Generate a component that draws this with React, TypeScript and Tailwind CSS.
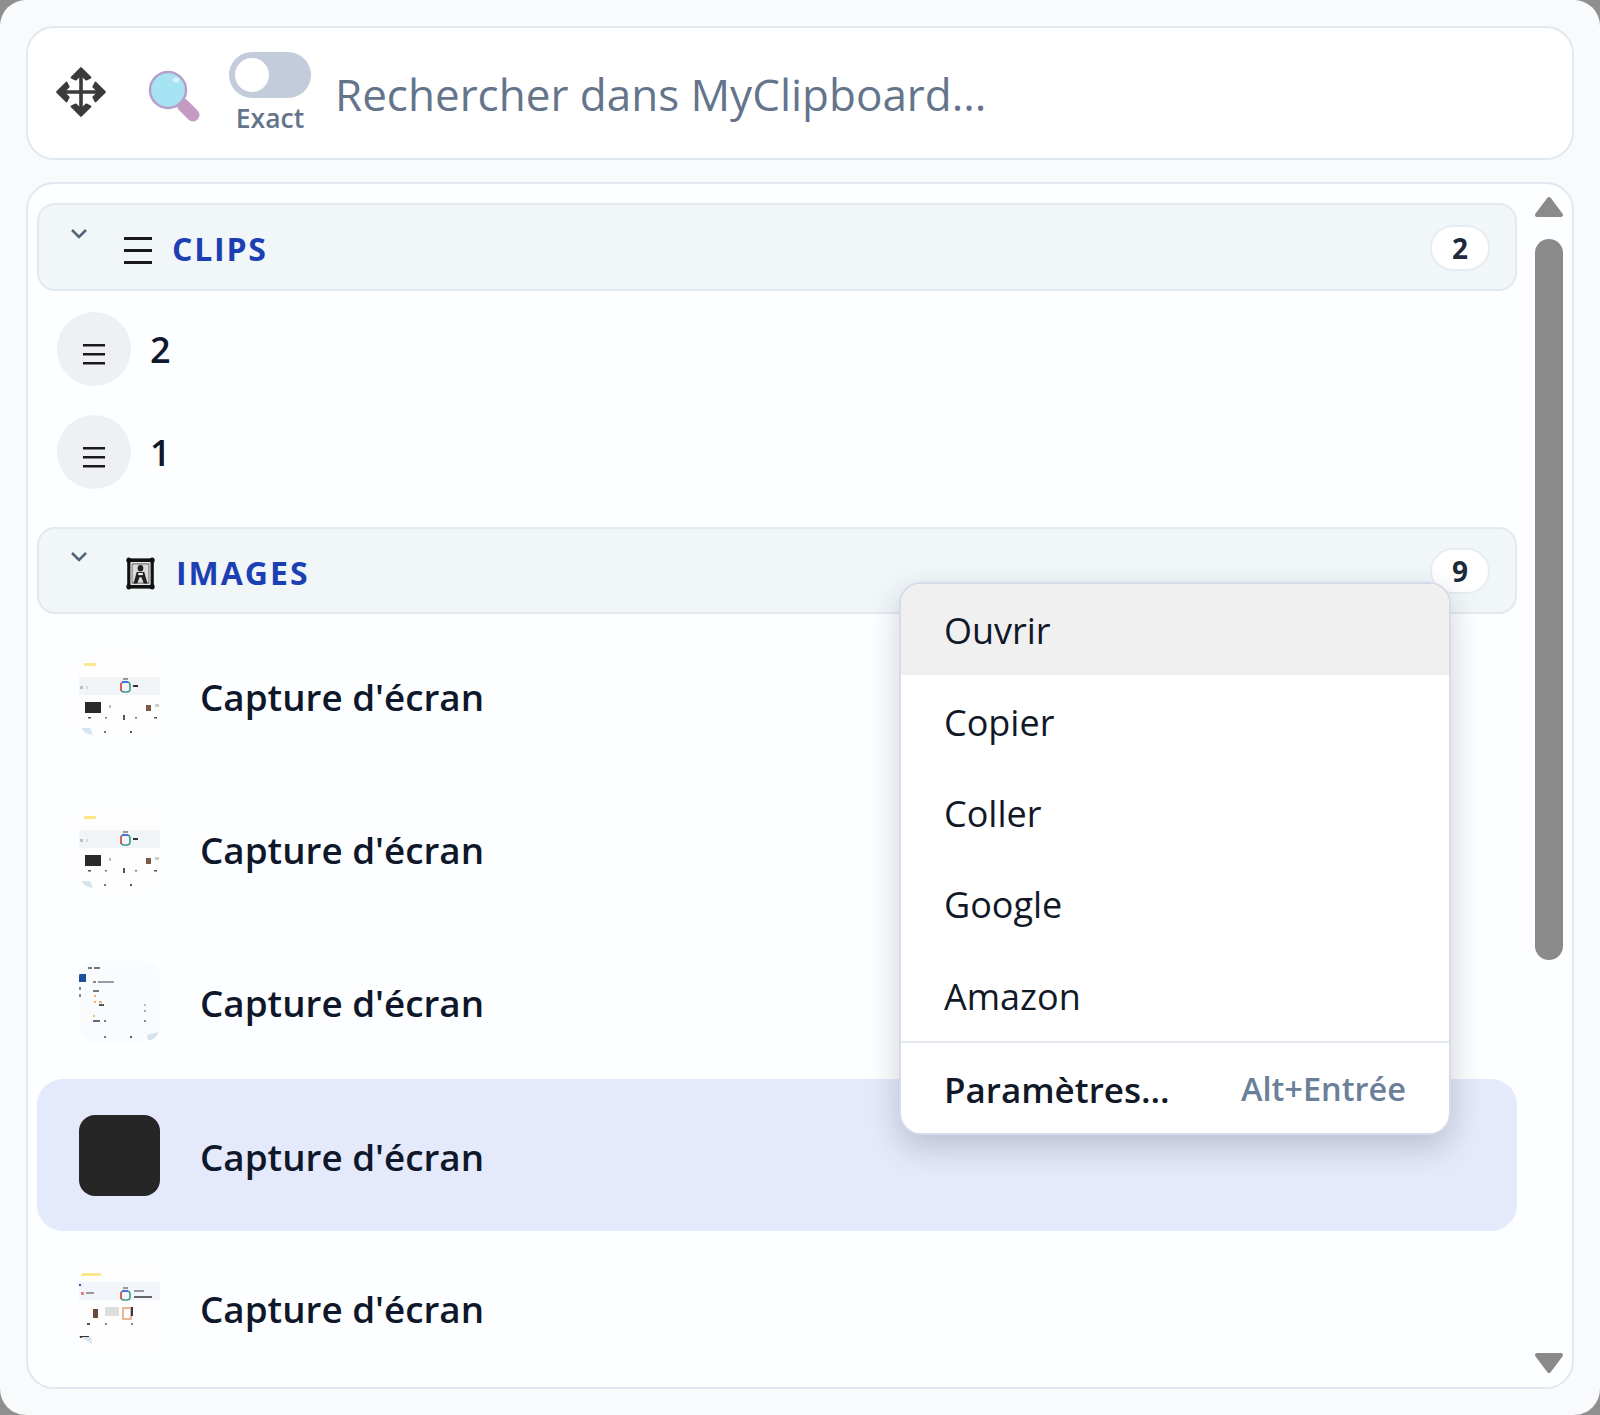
import React from "react";

const FONT = "font-['Open_Sans','Noto_Sans',sans-serif]";

function MoveIcon() {
  return (
    <svg width="56" height="56" viewBox="0 0 52 54" fill="none" className="mb-[2px] -ml-[1px] -mr-[1px] shrink-0">
      <path d="M26 5V49M4 27H48" stroke="#3b3b3b" strokeWidth="3.5" />
      <path d="M17 13L26 4L35 13L31 15L26 10L21 15Z" fill="#3b3b3b" stroke="#3b3b3b" strokeWidth="2" strokeLinejoin="round" />
      <path d="M17 41L26 50L35 41L31 39L26 44L21 39Z" fill="#3b3b3b" stroke="#3b3b3b" strokeWidth="2" strokeLinejoin="round" />
      <path d="M12 18L3 27L12 36L14 32L9 27L14 22Z" fill="#3b3b3b" stroke="#3b3b3b" strokeWidth="2" strokeLinejoin="round" />
      <path d="M40 18L49 27L40 36L38 32L43 27L38 22Z" fill="#3b3b3b" stroke="#3b3b3b" strokeWidth="2" strokeLinejoin="round" />
    </svg>
  );
}

function SearchIcon() {
  return (
    <svg width="54" height="54" viewBox="0 0 54 54" fill="none">
      <path d="M35 35L45 45" stroke="#c49ac2" strokeWidth="13" strokeLinecap="round" />
      <circle cx="20" cy="20" r="18" fill="#a6e3f3" stroke="#b9a0cc" strokeWidth="2.5" />
      <ellipse cx="28" cy="10" rx="3.5" ry="2.5" fill="#d6f3fa" />
    </svg>
  );
}

function Lines({ w, gap, stroke }: { w: number; gap: number; stroke: number }) {
  const h = gap * 2 + stroke;
  return (
    <svg width={w} height={h} viewBox={`0 0 ${w} ${h}`}>
      <rect x="0" y="0" width={w} height={stroke} fill="#1a1a1a" />
      <rect x="0" y={gap} width={w} height={stroke} fill="#1a1a1a" />
      <rect x="0" y={gap * 2} width={w} height={stroke} fill="#1a1a1a" />
    </svg>
  );
}

function FrameIcon() {
  return (
    <svg width="30" height="33" viewBox="0 0 31 31" preserveAspectRatio="none" fill="none" className="ml-[2px]">
      <rect x="3" y="3" width="25" height="25" fill="#e8e8e8" stroke="#111" strokeWidth="3.4" />
      <rect x="6.5" y="6.5" width="18" height="18" fill="#dcdcdc" stroke="#666" strokeWidth="1" />
      <circle cx="15.5" cy="10.5" r="3" fill="#222" />
      <path d="M8 25L11.5 14H19.5L23 25H19L16.5 19H14.5L12 25Z" fill="#222" />
      <rect x="13" y="15" width="5" height="2" fill="#eee" />
      <circle cx="3" cy="3" r="2.6" fill="#111" />
      <circle cx="28" cy="3" r="2.6" fill="#111" />
      <circle cx="3" cy="28" r="2.6" fill="#111" />
      <circle cx="28" cy="28" r="2.6" fill="#111" />
    </svg>
  );
}

function Chevron() {
  return (
    <svg width="18" height="12" viewBox="0 0 18 12" fill="none">
      <path d="M2 2L9 9L16 2" stroke="#54627a" strokeWidth="2.6" />
    </svg>
  );
}

function ThumbA() {
  return (
    <svg width="81" height="81" viewBox="0 0 81 81" className="blur-[0.7px]">
      <rect width="81" height="81" rx="12" fill="#fdfdfe" />
      <rect x="0" y="22" width="81" height="18" fill="#f2f5f8" />
      <rect x="5" y="8" width="12" height="3" fill="#fde68a" />
      <rect x="1" y="31" width="3" height="3" fill="#c8b8b8" />
      <rect x="7" y="31" width="2" height="3" fill="#d8d8d8" />
      <rect x="42" y="27" width="9" height="10" rx="3" fill="none" stroke="#3f9a8a" strokeWidth="1.6" />
      <rect x="41" y="28" width="2" height="8" fill="#dd5b5b" />
      <rect x="43" y="26" width="6" height="2" fill="#4c6fd8" />
      <rect x="44" y="23" width="5" height="2" fill="#999" />
      <rect x="54" y="30" width="5" height="2" fill="#333" />
      <rect x="6" y="47" width="16" height="11" fill="#2a2a2a" />
      <rect x="30" y="50" width="2" height="3" fill="#bbb" />
      <rect x="67" y="50" width="5" height="6" fill="#7a5a48" />
      <rect x="76" y="49" width="4" height="3" fill="#ccc" />
      <rect x="44" y="60" width="2" height="5" fill="#555" />
      <rect x="9" y="62" width="3" height="1.5" fill="#555" />
      <rect x="26" y="62" width="2" height="1.5" fill="#777" />
      <rect x="56" y="62" width="2" height="1.5" fill="#777" />
      <rect x="75" y="62" width="3" height="1.5" fill="#555" />
      <path d="M2 73H11L14 80L6 78Z" fill="#d6e4ee" />
      <rect x="25" y="76" width="2" height="2" fill="#777" />
      <rect x="51" y="76" width="2" height="2" fill="#555" />
    </svg>
  );
}

function ThumbB() {
  return (
    <svg width="81" height="81" viewBox="0 0 81 81" className="blur-[0.7px]">
      <rect width="81" height="81" rx="12" fill="#fafbfd" />
      <rect x="0" y="13" width="7" height="8" fill="#1e4e9c" />
      <rect x="9" y="6" width="4" height="2" fill="#777" />
      <rect x="15" y="6" width="6" height="2" fill="#777" />
      <rect x="14" y="20" width="3" height="2" fill="#888" />
      <rect x="19" y="20" width="16" height="2" fill="#99a" />
      <rect x="14" y="29" width="6" height="2" fill="#778" />
      <rect x="0" y="26" width="2" height="3" fill="#888" />
      <rect x="0" y="33" width="2" height="3" fill="#888" />
      <rect x="15" y="34" width="2" height="2" fill="#f0b070" />
      <rect x="15" y="40" width="2" height="2" fill="#f0b070" />
      <rect x="20" y="40" width="3" height="2" fill="#f0b070" />
      <rect x="20" y="43" width="5" height="2" fill="#555" />
      <rect x="14" y="54" width="2" height="2" fill="#f0c080" />
      <rect x="14" y="59" width="7" height="2" fill="#667" />
      <rect x="25" y="59" width="2" height="2" fill="#777" />
      <rect x="65" y="43" width="2" height="2" fill="#bbb" />
      <rect x="65" y="49" width="2" height="2" fill="#aaa" />
      <rect x="65" y="59" width="2" height="2" fill="#888" />
      <path d="M68 74L80 71L76 79L69 79Z" fill="#d6e4ee" />
      <rect x="25" y="75" width="2" height="2" fill="#777" />
      <rect x="51" y="75" width="2" height="2" fill="#666" />
    </svg>
  );
}

function ThumbC() {
  return (
    <svg width="81" height="81" viewBox="0 0 81 81" className="blur-[0.7px]">
      <rect width="81" height="81" rx="12" fill="#fdfdfe" />
      <rect x="2" y="6" width="20" height="3" fill="#fde68a" />
      <rect x="0" y="15" width="81" height="18" fill="#f2f5f9" />
      <rect x="0" y="17" width="2" height="2" fill="#5540c0" />
      <rect x="2" y="25" width="3" height="3" fill="#d88" />
      <rect x="7" y="25" width="8" height="2" fill="#999" />
      <rect x="42" y="24" width="9" height="9" rx="3" fill="none" stroke="#3f9a8a" strokeWidth="1.6" />
      <rect x="41" y="25" width="2" height="7" fill="#dd5b5b" />
      <rect x="43" y="23" width="6" height="2" fill="#4c6fd8" />
      <rect x="44" y="20" width="5" height="2" fill="#999" />
      <rect x="55" y="23" width="10" height="2" fill="#999" />
      <rect x="55" y="29" width="18" height="2" fill="#666" />
      <rect x="14" y="42" width="5" height="9" fill="#6a4a38" />
      <rect x="26" y="40" width="14" height="9" fill="#ddd" />
      <rect x="44" y="41" width="8" height="11" fill="none" stroke="#e0a070" strokeWidth="1.5" />
      <rect x="52" y="40" width="2" height="9" fill="#335" />
      <rect x="8" y="56" width="3" height="2" fill="#555" />
      <rect x="26" y="56" width="2" height="2" fill="#888" />
      <rect x="52" y="56" width="2" height="2" fill="#888" />
      <rect x="0" y="69" width="10" height="2" fill="#333" />
      <path d="M2 70H12L13 77Z" fill="#d6e4ee" />
    </svg>
  );
}

function SectionHeader({ title, count, icon, titleClass, heightClass }: { title: string; count: string; icon: React.ReactNode; titleClass: string; heightClass: string }) {
  return (
    <div className={`flex items-center rounded-[18px] border-2 border-[#e3e9f0] bg-[#f1f6f9] pl-[31px] pr-[25px] ${heightClass}`}>
      <div className="mb-[27px] w-[18px] shrink-0">
        <Chevron />
      </div>
      <div className="ml-[36px] mt-[6px] flex w-[31px] shrink-0 items-center justify-start">{icon}</div>
      <span className={`mt-[4px] text-[32px] leading-none font-bold text-[#1c3fb3] ${titleClass}`}>{title}</span>
      <span className="ml-auto mt-[1px] flex h-[46px] w-[60px] items-center justify-center rounded-full border-2 border-[#e8edf3] bg-white text-[28px] leading-none font-bold text-[#1e293b]">
        {count}
      </span>
    </div>
  );
}

function ClipRow({ label }: { label: string }) {
  return (
    <div className="flex h-[103px] items-center pl-[20px]">
      <div className="flex h-[74px] w-[74px] items-center justify-center rounded-full bg-[#eef0f4] pt-[12px]">
        <Lines w={22} gap={9} stroke={2.5} />
      </div>
      <span className="ml-[19px] mt-[3px] text-[36px] leading-none font-semibold text-[#0f172a]">{label}</span>
    </div>
  );
}

function ImageRow({ thumb, selected }: { thumb: React.ReactNode; selected?: boolean }) {
  return (
    <div className={`flex items-center pl-[42px] ${selected ? "-mb-[2px] h-[152px] rounded-[26px] bg-[#e4e9fb]" : "h-[150px]"}`}>
      <div className="h-[81px] w-[81px] shrink-0 overflow-hidden rounded-[16px]">{thumb}</div>
      <span className="ml-[40px] mt-[5px] text-[36.8px] leading-none font-semibold text-[#0f172a]">Capture d'écran</span>
    </div>
  );
}

function MenuItem({ label, active }: { label: string; active?: boolean }) {
  return (
    <div className={`flex h-[91.4px] items-center pl-[43px] pt-[3px] text-[36px] leading-none text-[#111827] ${active ? "bg-[#f0f0f0]" : ""}`}>
      {label}
    </div>
  );
}

export default function App() {
  return (
    <div className={`h-[1415px] w-[1600px] overflow-hidden bg-[#8f8f8f] ${FONT}`}>
      <div className="relative flex h-full w-full flex-col gap-[22px] rounded-[26px] bg-[#f8fafc] p-[26px]">
        <div className="flex h-[134px] shrink-0 items-center rounded-[28px] border-2 border-[#e2e8f0] bg-white pl-[26px]">
          <MoveIcon />
          <div className="ml-[40px] mt-[8px]">
            <SearchIcon />
          </div>
          <div className="ml-[27px] flex flex-col items-center">
            <div className="flex h-[46px] w-[82px] items-center rounded-full bg-[#c2ccdb] pl-[6px]">
              <div className="h-[34px] w-[34px] rounded-full bg-white" />
            </div>
            <span className="mt-[3px] text-[26.5px] leading-[34px] font-semibold text-[#64748b]">Exact</span>
          </div>
          <span className="ml-[24px] mt-[2px] text-[44px] leading-none text-[#64748b]">Rechercher dans MyClipboard...</span>
        </div>

        <div className="flex min-h-0 flex-1 overflow-hidden rounded-[28px] border-2 border-[#e2e8f0] bg-[#fdfeff] pl-[9px]">
          <div className="flex w-[1480px] shrink-0 flex-col pt-[19px]">
            <SectionHeader title="CLIPS" count="2" heightClass="h-[88px]" icon={<Lines w={28} gap={12} stroke={3} />} titleClass="ml-[17px] tracking-[1.8px]" />
            <div className="pt-[6px]">
              <ClipRow label="2" />
              <ClipRow label="1" />
            </div>
            <div className="mt-[24px]">
              <SectionHeader title="IMAGES" count="9" heightClass="h-[87px]" icon={<FrameIcon />} titleClass="ml-[21px] tracking-[2px]" />
            </div>
            <div className="flex flex-col gap-[3px] pt-[6px]">
              <ImageRow thumb={<ThumbA />} />
              <ImageRow thumb={<ThumbA />} />
              <ImageRow thumb={<ThumbB />} />
              <ImageRow selected thumb={<div className="h-full w-full bg-[#262626]" />} />
              <ImageRow thumb={<ThumbC />} />
            </div>
          </div>
          <div className="ml-[17px] flex h-[1190px] w-[30px] shrink-0 flex-col items-center pt-[12px]">
            <svg width="30" height="22" viewBox="0 0 30 22" className="shrink-0">
              <path d="M15 3L27 19H3Z" fill="#8a8a8a" stroke="#8a8a8a" strokeWidth="4" strokeLinejoin="round" />
            </svg>
            <div className="mt-[21px] h-[721px] w-[28px] shrink-0 rounded-full bg-[#8a8a8a]" />
            <div className="flex-1" />
            <svg width="30" height="22" viewBox="0 0 30 22" className="shrink-0">
              <path d="M15 19L27 3H3Z" fill="#8a8a8a" stroke="#8a8a8a" strokeWidth="4" strokeLinejoin="round" />
            </svg>
          </div>
        </div>

        <div className="absolute left-[899px] top-[582px] w-[552px] overflow-hidden rounded-[22px] border-2 border-[#d5dbe8] bg-white shadow-[0_12px_32px_rgba(15,23,42,0.2)]">
          <MenuItem label="Ouvrir" active />
          <MenuItem label="Copier" />
          <MenuItem label="Coller" />
          <MenuItem label="Google" />
          <MenuItem label="Amazon" />
          <div className="flex h-[92px] items-center justify-between border-t-2 border-[#e5e7ef] pl-[43px] pr-[43px] pt-[3px]">
            <span className="text-[35px] leading-none font-semibold text-[#111827]">Paramètres...</span>
            <span className="text-[32.5px] leading-none font-semibold text-[#6b7f99]">Alt+Entrée</span>
          </div>
        </div>
      </div>
    </div>
  );
}
